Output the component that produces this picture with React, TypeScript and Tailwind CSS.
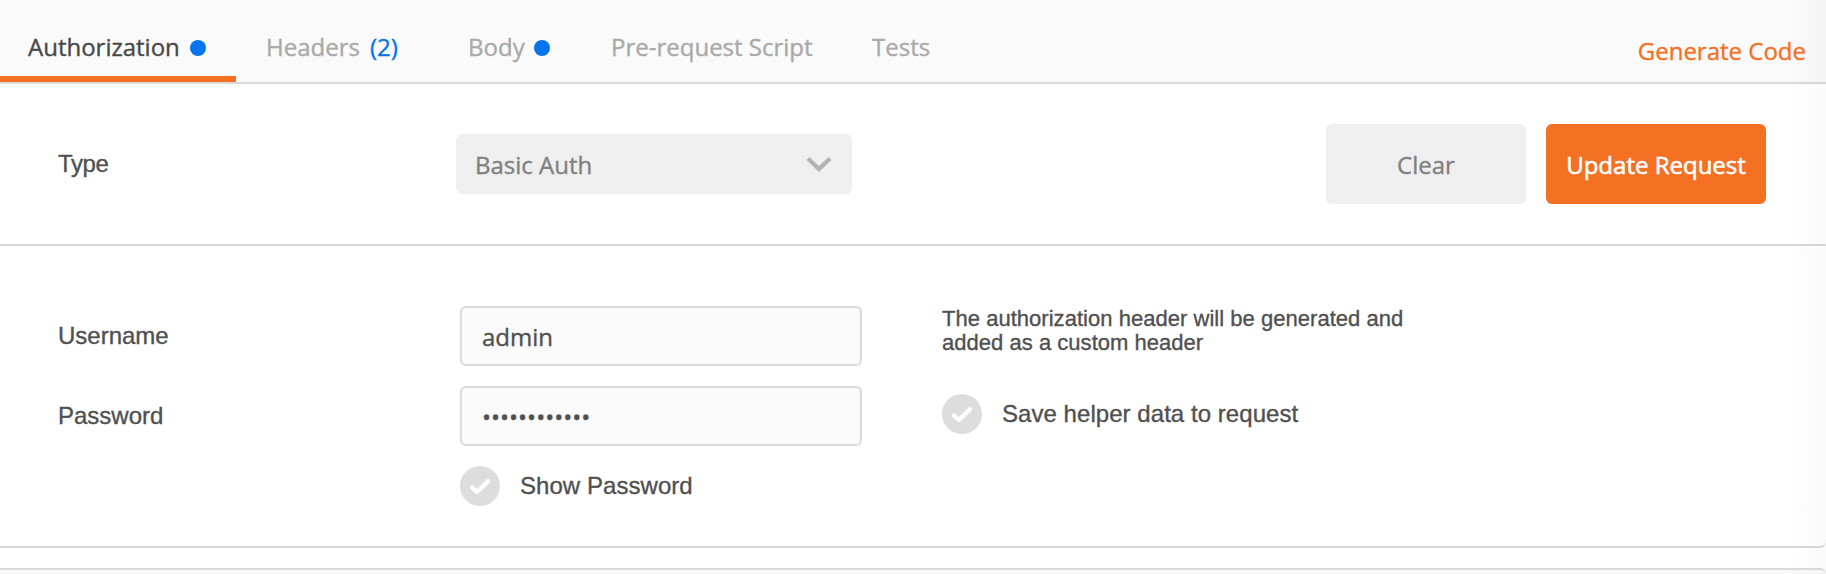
import type { ReactNode } from "react";

const sans = "font-['Open_Sans',sans-serif]";

function Dot() {
  return <span className="block size-4 rounded-full bg-[#0574ee]" />;
}

function Tab({ className, children }: { className: string; children: ReactNode }) {
  return (
    <button className={`flex h-[82px] items-center whitespace-nowrap pt-[14px] text-[#a9a9a9] ${className}`}>
      {children}
    </button>
  );
}

function Check({ label }: { label: string }) {
  return (
    <label className="flex h-10 items-center gap-5 text-[24px] leading-10">
      <svg className="size-10 shrink-0" viewBox="0 0 40 40" fill="none">
        <circle cx="20" cy="20" r="20" fill="#dddddd" />
        <path d="M12 21.5L16.8 26L28 15.3" stroke="#fff" strokeWidth="4.4" strokeLinecap="round" strokeLinejoin="round" />
      </svg>
      <span className="whitespace-nowrap tracking-[0.05px]">{label}</span>
    </label>
  );
}

const field =
  "block h-[60px] w-[402px] rounded-md border-2 border-[#dadada] bg-[#fafafa] pl-5 text-[24px] text-[#505050] outline-none font-['Open_Sans',sans-serif]";

export default function App() {
  return (
    <div className="relative h-[574px] w-[1826px] overflow-hidden bg-white font-['Liberation_Sans',Arial,sans-serif] text-[24px] text-[#505050] [-webkit-text-stroke:0.35px_currentColor]">
      <header className={`flex h-[84px] items-start border-b-2 border-[#dadada] bg-[#fafafa] ${sans}`}>
        <nav className="flex">
          <button className="flex h-[82px] w-[236px] items-center border-b-[6px] border-[#f47023] pl-7 pt-[20px] text-[#484848]">
            <span className="w-[162px] pb-[2px] text-left">Authorization</span>
            <Dot />
          </button>
          <Tab className="w-[232px] pl-[30px]">
            <span className="w-[104px] pb-[2px] text-left">Headers</span>
            <span className="pb-[2px] text-[#0574ee]">(2)</span>
          </Tab>
          <Tab className="w-[143px]">
            <span className="w-[66px] pb-[2px] text-left">Body</span>
            <Dot />
          </Tab>
          <Tab className="w-[261px]">
            <span className="pb-[2px]">Pre-request Script</span>
          </Tab>
          <Tab className="">
            <span className="pb-[2px]">Tests</span>
          </Tab>
        </nav>
        <a className="ml-auto mr-5 mt-[34px] leading-[34px] text-[#f47023]">Generate Code</a>
      </header>

      <section className="flex h-[162px] items-start border-b-2 border-[#dadada] pl-[58px] pr-[60px]">
        <span className="mt-[60px] w-[398px] leading-10 tracking-[-0.4px]">Type</span>
        <div className={`mt-[50px] flex h-[60px] w-[396px] items-center justify-between rounded-md bg-[#efefef] pl-[19px] pr-[20px] text-[#808080] ${sans}`}>
          <span className="pt-[2px]">Basic Auth</span>
          <svg className="h-4 w-[26px]" viewBox="0 0 26 16" fill="none">
            <path d="M2 2.5L13 13L24 2.5" stroke="#b3b3b3" strokeWidth="4.2" />
          </svg>
        </div>
        <div className={`ml-auto mt-10 flex gap-5 ${sans}`}>
          <button className="h-20 w-[200px] rounded-md bg-[#efefef] pt-[2px] text-[#808080]">Clear</button>
          <button className="h-20 w-[220px] whitespace-nowrap rounded-md bg-[#f47023] pt-[2px] text-white [-webkit-text-stroke:0.6px_currentColor]">Update Request</button>
        </div>
      </section>

      <section className="flex h-[302px] items-start rounded-br-md border-b-2 border-[#dadada] pl-[58px]">
        <div className="flex w-[402px] flex-col gap-5 pt-[60px]">
          <span className="h-[60px] leading-[60px]">Username</span>
          <span className="h-[60px] leading-[60px]">Password</span>
        </div>
        <div className="flex w-[482px] flex-col gap-5 pt-[60px]">
          <input className={field} type="text" defaultValue="admin" />
          <input className={field} type="password" defaultValue="abcdefghijkl" />
          <Check label="Show Password" />
        </div>
        <div className="flex flex-col pt-[61px]">
          <p className="h-[87px] whitespace-nowrap text-[22px] leading-6 tracking-[0.03px]">
            The authorization header will be generated and
            <br />
            added as a custom header
          </p>
          <Check label="Save helper data to request" />
        </div>
      </section>

      <section className="mt-5 h-10 rounded-tr-md border-t-2 border-[#dadada] bg-[#fafafa]" />

      <div className="pointer-events-none absolute inset-y-0 right-0 w-10 bg-linear-to-r from-transparent to-black/2" />
    </div>
  );
}
